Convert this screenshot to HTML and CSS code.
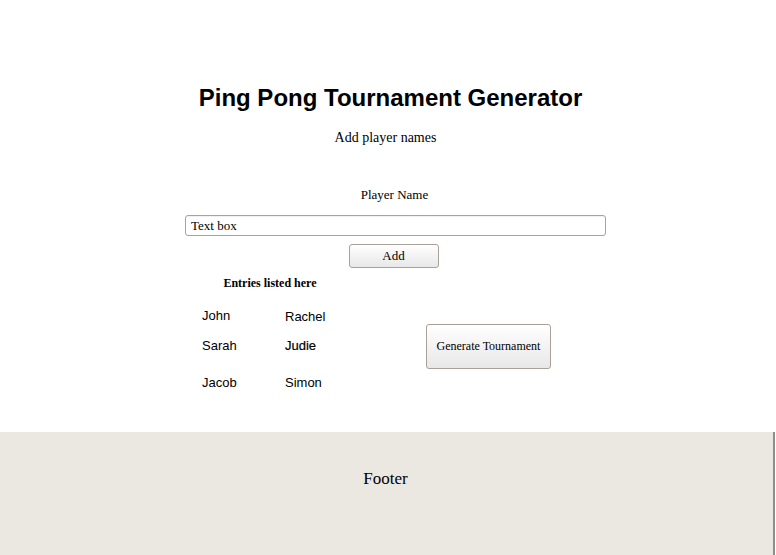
FILE: index.html
```html
<!DOCTYPE html>
<html>
<head>
<meta charset="utf-8">
<link rel="stylesheet" href="styles.css">
</head>
<body>
<main class="main">
  <h1 class="title">Ping Pong Tournament Generator</h1>
  <p class="subtitle">Add player names</p>
  <form class="form">
    <label class="label" for="name">Player Name</label>
    <input class="textbox" id="name" type="text" value="Text box">
    <button class="btn btn-add" type="button">Add</button>
  </form>
  <section class="entries">
    <div class="list">
      <h2 class="list-title">Entries listed here</h2>
      <div class="names">
        <div class="row row-1"><span class="name">John</span><span class="name low">Rachel</span></div>
        <div class="row row-2"><span class="name">Sarah</span><span class="name bold">Judie</span></div>
        <div class="row row-3"><span class="name">Jacob</span><span class="name">Simon</span></div>
      </div>
    </div>
    <button class="btn btn-generate" type="button">Generate Tournament</button>
  </section>
</main>
<footer class="footer">Footer</footer>
</body>
</html>
```
FILE: styles.css
```css
html, body {
  margin: 0;
  padding: 0;
  background: #fff;
}
body {
  font-family: "Liberation Serif", "Times New Roman", serif;
  color: #000;
  width: 776px;
  height: 555px;
  overflow: hidden;
}
.main {
  height: 432px;
  box-sizing: border-box;
  padding-top: 84px;
  display: flex;
  flex-direction: column;
}
.title {
  margin: 0;
  font-family: "Liberation Sans", Arial, sans-serif;
  font-weight: bold;
  font-size: 24px;
  line-height: 28px;
  text-align: center;
  padding-left: 5px;
}
.subtitle {
  margin: 17px 0 0;
  font-size: 14px;
  line-height: 18px;
  text-align: center;
  padding-right: 5px;
}
.form {
  margin: 40px 0 0 185px;
  width: 421px;
  display: flex;
  flex-direction: column;
  align-items: center;
}
.label {
  font-size: 13px;
  line-height: 16px;
  margin-right: 2px;
}
.textbox {
  margin-top: 12px;
  width: 421px;
  height: 21px;
  box-sizing: border-box;
  border: 1px solid #aaa398;
  border-radius: 3px;
  padding: 0 5px;
  font-family: "Liberation Serif", "Times New Roman", serif;
  font-size: 13px;
  color: #000;
  background: #fff;
  box-shadow: inset 0 1px 1px rgba(0,0,0,0.06);
}
.btn {
  font-family: "Liberation Serif", "Times New Roman", serif;
  font-size: 13px;
  color: #000;
  border: 1px solid #a9a197;
  border-radius: 3px;
  background: linear-gradient(#ffffff, #f3f3f3 50%, #e8e8e8);
  padding: 0;
  cursor: pointer;
}
.btn-add {
  margin-top: 8px;
  margin-right: 4px;
  width: 90px;
  height: 24px;
}
.entries {
  display: flex;
  align-items: flex-start;
  margin: 7px 0 0 202px;
}
.list {
  width: 136px;
}
.list-title {
  margin: 0;
  font-size: 12px;
  line-height: 16px;
  font-weight: bold;
  text-align: center;
}
.names {
  font-family: "Liberation Sans", Arial, sans-serif;
  font-size: 13px;
  line-height: 16px;
}
.row {
  display: grid;
  grid-template-columns: 83px auto;
}
.row-1 { margin-top: 17px; }
.row-2 { margin-top: 14px; }
.row-3 { margin-top: 21px; }
.low { position: relative; top: 1px; }
.bold { -webkit-text-stroke: 0.2px #000; }
.btn-generate {
  margin: 49px 0 0 88px;
  width: 125px;
  height: 45px;
  font-size: 12px;
}
.footer {
  height: 123px;
  width: 775px;
  background: #ebe8e2;
  border-right: 2px solid #8e8e8e;
  font-size: 17px;
  line-height: 22px;
  padding-top: 36px;
  text-align: center;
  box-sizing: border-box;
  padding-right: 2px;
}
```
